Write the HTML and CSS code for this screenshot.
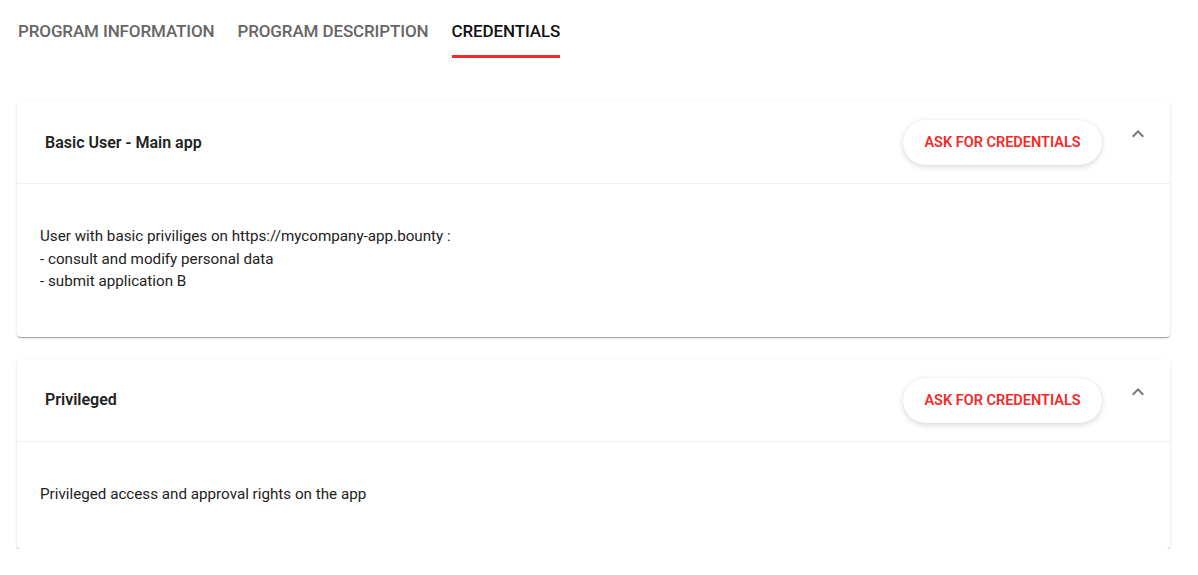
FILE: index.html
```html
<!DOCTYPE html>
<html>
<head>
<meta charset="utf-8">
<link rel="stylesheet" href="styles.css">
</head>
<body>
<div class="page">
  <nav class="tabs">
    <div class="tab">PROGRAM INFORMATION</div>
    <div class="tab">PROGRAM DESCRIPTION</div>
    <div class="tab active">CREDENTIALS</div>
  </nav>
  <div class="cards">
    <section class="card">
      <header class="card-head">
        <h3 class="card-title">Basic User - Main app</h3>
        <button class="ask">ASK FOR CREDENTIALS</button>
        <svg class="chev" width="24" height="24" viewBox="0 0 24 24"><path d="M12 8l-6 6 1.41 1.41L12 10.83l4.59 4.58L18 14z" fill="#757575"/></svg>
      </header>
      <div class="card-body">
        <p>User with basic priviliges on https://mycompany-app.bounty :<br>- consult and modify personal data<br>- submit application B</p>
      </div>
    </section>
    <section class="card">
      <header class="card-head">
        <h3 class="card-title">Privileged</h3>
        <button class="ask">ASK FOR CREDENTIALS</button>
        <svg class="chev" width="24" height="24" viewBox="0 0 24 24"><path d="M12 8l-6 6 1.41 1.41L12 10.83l4.59 4.58L18 14z" fill="#757575"/></svg>
      </header>
      <div class="card-body">
        <p>Privileged access and approval rights on the app</p>
      </div>
    </section>
  </div>
</div>
</body>
</html>
```
FILE: styles.css
```css
* { box-sizing: border-box; }
html, body { margin: 0; padding: 0; background: #fff; }
body { font-family: Roboto, "Liberation Sans", sans-serif; color: #222; }
.page { padding: 0 28px 0 17px; }
.tabs { display: flex; gap: 23px; padding-left: 1px; height: 58px; }
.tab {
  font-size: 17px; font-weight: 500; color: #666; letter-spacing: -0.12px;
  padding-top: 21px; height: 58px; border-bottom: 3px solid transparent;
}
.tab.active { color: #111; border-bottom-color: #f42a2a; }
.cards { margin-top: 43px; display: flex; flex-direction: column; gap: 22px; }
.card {
  background: #fff; border-radius: 4px;
  box-shadow: 0 2px 1px -1px rgba(0,0,0,0.2), 0 1px 1px 0 rgba(0,0,0,0.14), 0 1px 3px 0 rgba(0,0,0,0.12);
}
.card-head {
  display: flex; align-items: center; height: 83px;
  padding: 0 20px 0 28px; border-bottom: 1px solid #f0f0f0;
}
.card-title { margin: 0; flex: 1; font-size: 16px; font-weight: 600; color: #222; }
.ask {
  font-family: inherit; font-size: 14.5px; font-weight: 600; color: #f42a2a;
  background: #fff; border: 0; border-radius: 23px; height: 45px; width: 199px;
  box-shadow: 0 2px 6px rgba(0,0,0,0.15), 0 0 2px rgba(0,0,0,0.06);
  margin-right: 24px; margin-top: 1px;
}
.chev { align-self: flex-start; margin-top: 21px; }
.card-body { padding: 41px 23px 44px; }
.card-body p { margin: 0; font-size: 15.2px; line-height: 22.5px; color: #222; }
```
